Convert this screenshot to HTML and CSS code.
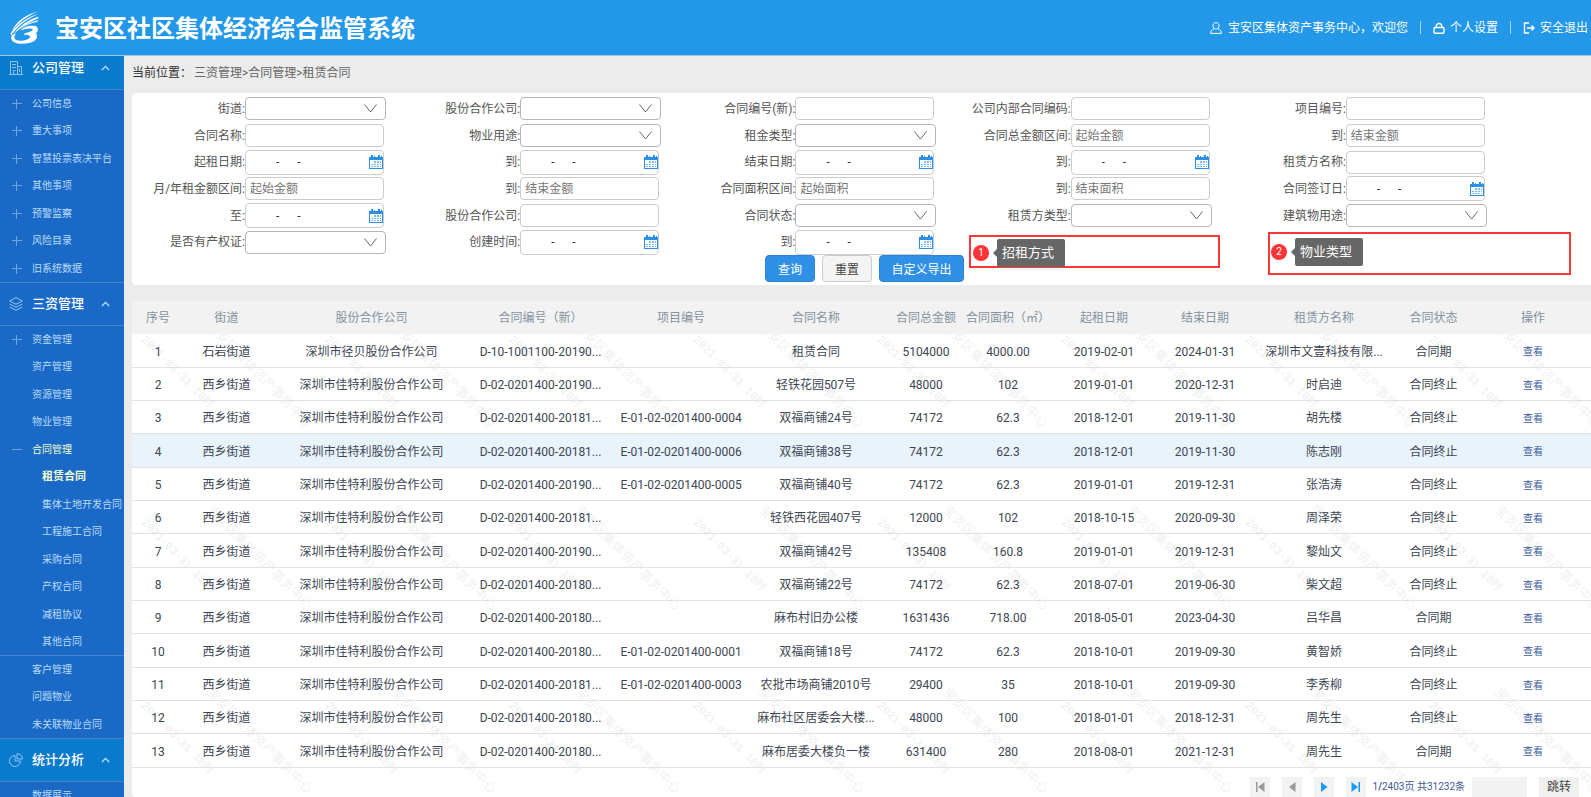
FILE: index.html
```html
<!DOCTYPE html>
<html lang="zh-CN">
<head>
<meta charset="utf-8">
<title>宝安区社区集体经济综合监管系统</title>
<link rel="stylesheet" href="styles.css">
</head>
<body>
<svg class="defs" aria-hidden="true">
  <symbol id="i-cal" viewBox="0 0 14 14"><path fill="#2b8fe6" d="M0 2h2V0h2v2h1V1h1v1h3V0h2v2h1V1h1v1h1v12H0z"/><path fill="#fff" d="M1 5h12v8H1z"/><path fill="#7db9ef" d="M2 9h2v1H2zM2 11h2v1H2zM5 6h2v2H5zM8 6h2v2H8zM11 6h1v2h-1zM5 9h2v1H5zM8 9h2v1H8zM11 9h1v1h-1zM5 11h2v1H5zM8 11h2v1H8zM11 11h1v1h-1z"/></symbol>
  <symbol id="i-up" viewBox="0 0 10 6"><path fill="none" stroke="currentColor" stroke-width="1.4" d="M1 5.2 5 1.2l4 4"/></symbol>
  <symbol id="i-plus" viewBox="0 0 10 10"><path stroke="currentColor" d="M0 4.500h10M4.500 0v10"/></symbol>
  <symbol id="i-minus" viewBox="0 0 10 10"><path stroke="currentColor" d="M0 4.500h10"/></symbol>
</svg>
<header class="top">
  <svg class="logo" viewBox="0 0 90 98" fill="#fff"><path d="M84 0C48 10 16 32 5 62 24 34 50 16 84 0z"/><path d="M86 7C54 18 22 38 2 66l1 8C24 42 52 24 86 7z"/><path d="M86 17C58 24 26 44 4 78 22 54 50 36 84 22z"/><path d="M85 27C60 32 30 46 14 66 30 50 56 38 82 32z"/><path d="M4 76C0 96 30 102 60 95 78 90 86 78 78 66 88 58 86 42 66 44 52 44 38 50 32 58c14-6 32-8 36-4 2 6-14 10-24 12l-2 5c12 0 20 2 18 7-4 10-40 16-46 4-2-5 0-9 4-14-8 2-12 4-14 8z"/></svg>
  <h1 class="title">宝安区社区集体经济综合监管系统</h1>
  <div class="user">
    <svg class="uicon" viewBox="0 0 12 12" fill="none" stroke="#fff"><path d="M6 .6c-4 0-4 6.400 0 6.400s4-6.400 0-6.400zM4 7C1.500 8 .6 9 .6 11.400h10.800C11.400 9 10.500 8 8 7"/></svg>
    <span>宝安区集体资产事务中心，欢迎您</span>
    <i class="bar"></i>
    <a href="#"><svg class="uicon" viewBox="0 0 12 12" fill="none" stroke="#fff" stroke-width="1.400"><rect x="1" y="5.500" width="10" height="5.800" rx="1"/><path d="M3 5.500C3 .2 9 .2 9 5.500"/></svg>个人设置</a>
    <i class="bar"></i>
    <a href="#"><svg class="uicon" viewBox="0 0 12 12" fill="none" stroke="#fff" stroke-width="1.400"><path d="M6 1H1.500v10H6M4 6h6M8.500 3.500 11 6 8.500 8.500"/></svg>安全退出</a>
  </div>
</header>
<div class="body">
  <nav class="side">
    <button class="group on first" type="button"><svg class="gicon" viewBox="0 0 14 14" fill="none" stroke="currentColor"><path d="M1.500 13V.5h7V13M9 5.500h3.500V13M0 13.500h14M3 3.500h4M3 6.500h4M4.500 13v-3.500h2M10.500 8v3"/></svg><span>公司管理</span><svg class="up"><use href="#i-up"/></svg></button>
    <ul class="menu" id="menu1"></ul>
    <button class="group" type="button"><svg class="gicon" viewBox="0 0 14 14" fill="none" stroke="currentColor"><path d="M7 .6 13.400 4 7 7.400.6 4zM.6 7 7 10.400 13.400 7M.6 10 7 13.400 13.400 10"/></svg><span>三资管理</span><svg class="up"><use href="#i-up"/></svg></button>
    <ul class="menu" id="menu2"></ul>
    <button class="group on" type="button"><svg class="gicon" viewBox="0 0 14 14" fill="none" stroke="currentColor"><path d="M6 2.500A5.500 5.500 0 1 0 11.500 8H6zM8 .6V6h5.400A5.400 5.400 0 0 0 8 .6z"/></svg><span>统计分析</span><svg class="up"><use href="#i-up"/></svg></button>
    <ul class="menu" id="menu3"></ul>
  </nav>
  <main class="main">
    <p class="crumb"><span class="here">当前位置：</span>三资管理&gt;合同管理&gt;租赁合同</p>
    <form class="panel">
      <div class="fields" id="fields"></div>
      <div class="actions">
        <button class="btn primary" type="button">查询</button>
        <button class="btn plain" type="button">重置</button>
        <button class="btn primary wide" type="button">自定义导出</button>
      </div>
      <div class="note note-a"><b class="num">1</b><span class="tip">招租方式</span></div>
      <div class="note note-b"><b class="num">2</b><span class="tip">物业类型</span></div>
    </form>
    <section class="list">
      <svg class="mark" aria-hidden="true" id="mark"><defs><g id="wm"><text class="stamp" transform="translate(9 13) rotate(45)">2021-03-31 18时</text><text transform="translate(74 0) rotate(45)">宝安区集体资产事务中心</text></g></defs></svg>
      <table class="grid">
        <colgroup><col class="c1"><col class="c2"><col class="c3"><col class="c4"><col class="c5"><col class="c6"><col class="c7"><col class="c8"><col class="c9"><col class="c10"><col class="c11"><col class="c12"><col class="c13"></colgroup>
        <thead><tr><th>序号</th><th>街道</th><th>股份合作公司</th><th>合同编号（新）</th><th>项目编号</th><th>合同名称</th><th>合同总金额</th><th>合同面积（㎡）</th><th>起租日期</th><th>结束日期</th><th>租赁方名称</th><th>合同状态</th><th>操作</th></tr></thead>
        <tbody id="rows"></tbody>
      </table>
      <div class="pager">
        <button class="pg off" type="button" aria-label="首页"><svg viewBox="0 0 10 10"><path fill="currentColor" d="M1 0h1.500v10H1zM9.500 0v10L3 5z"/></svg></button>
        <button class="pg off" type="button" aria-label="上一页"><svg viewBox="0 0 10 10"><path fill="currentColor" d="M8.500 0v10L2 5z"/></svg></button>
        <button class="pg" type="button" aria-label="下一页"><svg viewBox="0 0 10 10"><path fill="currentColor" d="M2 0v10l6.500-5z"/></svg></button>
        <button class="pg" type="button" aria-label="末页"><svg viewBox="0 0 10 10"><path fill="currentColor" d="M.5 0v10L7 5zM7.500 0H9v10H7.500z"/></svg></button>
        <span class="total">1<b>/</b>2403页 共31232条</span>
        <input class="jump" type="text" aria-label="页码">
        <button class="go" type="button">跳转</button>
      </div>
    </section>
  </main>
</div>
<script src="script.js"></script>
</body>
</html>
```
FILE: styles.css
```css
* { box-sizing: border-box; }
body {
  margin: 0;
  height: 100vh;
  overflow: hidden;
  display: flex;
  flex-direction: column;
  background: #ececec;
  color: #3d4653;
  font: 12px/16px Roboto, "Noto Sans CJK SC", sans-serif;
}
button, input, select { font: inherit; color: inherit; margin: 0; }
ul { list-style: none; margin: 0; padding: 0; }
a { color: inherit; text-decoration: none; }
.defs { position: absolute; width: 0; height: 0; }

.top {
  flex: none;
  display: flex;
  align-items: center;
  height: 55px;
  padding: 0 3px 0 10px;
  background: #2397e8;
  color: #fff;
}
.logo { width: 30px; height: 33px; }
.title { margin: 2px 0 0 15px; font-size: 24px; line-height: 32px; font-weight: 700; }
.user { margin-left: auto; display: flex; align-items: center; gap: 6px; }
.user a { display: flex; align-items: center; gap: 5px; }
.uicon { width: 12px; height: 12px; }
.bar { width: 1px; height: 13px; margin: 0 6px; background: #a9d6f7; }

.body { flex: 1; min-height: 0; display: flex; border-top: 1px solid #9cc8ec; }
.side { flex: none; width: 124px; overflow: hidden; background: #1b69c6; color: #b9dcfb; }
.group {
  display: flex;
  align-items: center;
  width: 100%;
  height: 44px;
  padding: 0 14px 0 9px;
  border: 0;
  border-bottom: 1px solid #4485d2;
  border-top: 1px solid #4485d2;
  background: transparent;
  color: #8fc4f2;
  font-size: 13px;
}
.group.on { background: #0a7bcc; }
.group.first { height: 34px; border-top: 0; padding-bottom: 9px; }
.group span { margin-left: 9px; color: #fff; font-weight: 500; }
.gicon { width: 14px; height: 14px; }
.up { width: 9px; height: 6px; margin-left: auto; color: #c5e2fa; }
.menu { display: grid; grid-auto-rows: 27px 28px; }
.menu li { display: flex; align-items: center; font-size: 10px; padding-left: 12px; white-space: nowrap; }
.menu svg { width: 10px; height: 10px; color: #6ba6e2; }
.menu a { margin-left: 10px; }
.menu li.leaf { padding-left: 22px; }
.menu li.sub { padding-left: 32px; }
.menu .open a, .menu .cur a { color: #f1ffd0; }
.menu .cur a { font-size: 11px; font-weight: 700; }
.menu .last { border-bottom: 1px solid #4485d2; }

.main { flex: 1; min-width: 0; display: flex; flex-direction: column; padding-left: 8px; }
.crumb { margin: 0; padding: 9px 0 12px; color: #666; }
.here { color: #333; margin-right: 2px; }
.panel { position: relative; padding: 2px 0 3px; background: #fff; border-radius: 4px 0 0 4px; }
.fields {
  display: grid;
  grid-template-columns: repeat(5, 1fr);
  grid-auto-rows: 27px 27px 26px;
  padding-right: 83px;
}
.field { display: flex; align-items: center; color: #555; }
.field label { flex: none; width: 113px; text-align: right; white-space: nowrap; }
.box { display: flex; align-items: center; position: relative; width: 139px; }
.box.sel { width: 141px; }
.box input, .box select {
  width: 100%;
  height: 23px;
  padding: 0 4px;
  border: 1px solid #ccc;
  border-radius: 4px;
  background: #fff;
  outline: 0;
}
.box select { border-color: #b5b5b5; appearance: none; }
.box.date input { height: 25px; padding-left: 30px; color: #333; }
.box input::placeholder { color: #777; opacity: 1; }
.box .cal { position: absolute; right: 1px; width: 14px; height: 14px; }
.box .down { position: absolute; right: 9px; width: 13px; height: 9px; pointer-events: none; }
.actions { display: flex; justify-content: center; gap: 7px; padding-left: 6px; }
.btn { height: 27px; width: 50px; padding: 2px 0 0; border-radius: 4px; border: 1px solid #2a83d6; background: #3090e5; color: #fff; }
.btn.plain { border-color: #ccc; background: #f4f4f4; color: #444; }
.btn.wide { width: 85px; }
.note { position: absolute; display: flex; align-items: center; border: 2px solid #fb3838; }
.note-a { left: 837px; top: 142px; width: 251px; height: 33px; padding: 2px 0 0 2px; }
.note-b { left: 1136px; top: 139px; width: 303px; height: 43px; padding: 0 0 4px 1px; }
.num { width: 16px; height: 16px; border-radius: 8px; background: #fb3535; color: #fff; font-size: 10px; font-weight: 400; text-align: center; }
.tip { position: relative; margin-left: 8px; padding: 5px; border-radius: 2px; background: #666; color: #fff; font-size: 13px; line-height: 18px; width: 68px; white-space: nowrap; }
.tip::before { content: ""; position: absolute; left: -4px; top: 10px; border: 4px solid transparent; border-left: 0; border-right-color: #666; }

.list { position: relative; flex: 1; min-height: 0; margin-top: 16px; overflow: hidden; background: #fff; border-radius: 4px 0 0 4px; }
.mark { position: absolute; left: 0; top: 0; width: 100%; height: 100%; fill: #ededed; font: 300 13px "Noto Sans CJK SC", sans-serif; }
.stamp { font: 11px "Liberation Mono", "Noto Sans CJK SC", monospace; }
.grid { position: relative; width: 100%; table-layout: fixed; border-collapse: separate; border-spacing: 0; }
.c1 { width: 43px; } .c2 { width: 103px; } .c3 { width: 187px; } .c4 { width: 151px; }
.c5 { width: 130px; } .c6 { width: 140px; } .c7 { width: 80px; } .c8 { width: 84px; }
.c9 { width: 108px; } .c10 { width: 94px; } .c11 { width: 144px; } .c12 { width: 75px; } .c13 { width: 120px; }
.grid th, .grid td { padding: 0; text-align: center; white-space: nowrap; font-weight: 400; }
.grid th { height: 33px; background: #f2f2f2; color: #8492a0; }
.grid td { height: 33px; padding-top: 2px; border-bottom: 1px solid #e2e2e2; }
.grid tr:nth-child(3n+1) td { height: 34px; }
.grid .hot td { background: #e8f3fc; }
.grid td:first-child, .grid th:first-child { padding-left: 9px; }
.grid td:last-child, .grid th:last-child { padding-left: 4px; }
.grid td a { font-size: 10px; color: #3a5ba0; }
.pager { position: relative; display: flex; justify-content: flex-end; align-items: center; padding: 9px 12px 0 0; gap: 12px; color: #3f5a8f; }
.pg { display: flex; align-items: center; justify-content: center; width: 20px; height: 20px; padding: 0; border: 0; background: #f2f2f2; color: #1b9cf0; }
.pg svg { width: 10px; height: 10px; }
.pg.off { color: #999; }
.total { font-size: 10px; margin-left: -5px; white-space: nowrap; }
.jump { width: 55px; height: 20px; border: 0; background: #f2f2f2; margin-left: -5px; }
.go { width: 40px; height: 20px; padding: 0; border: 0; background: #f0f0f0; color: #444; }
```
FILE: script.js
```js
const el = id => document.getElementById(id);

const item = ([name, cls]) => {
  const icon = cls.includes('plus') ? 'plus' : cls.includes('open') ? 'minus' : '';
  return `<li class="${cls}">${icon ? `<svg><use href="#i-${icon}"/></svg>` : ''}<a href="#">${name}</a></li>`;
};
el('menu1').innerHTML = ['公司信息', '重大事项', '智慧投票表决平台', '其他事项', '预警监察', '风险目录', '旧系统数据']
  .map(n => item([n, 'plus'])).join('');
el('menu2').innerHTML = [
  ['资金管理', 'plus'], ['资产管理', 'leaf'], ['资源管理', 'leaf'], ['物业管理', 'leaf'], ['合同管理', 'open'],
  ['租赁合同', 'sub cur'], ['集体土地开发合同', 'sub'], ['工程施工合同', 'sub'], ['采购合同', 'sub'],
  ['产权合同', 'sub'], ['减租协议', 'sub'], ['其他合同', 'sub last'],
  ['客户管理', 'leaf'], ['问题物业', 'leaf'], ['未关联物业合同', 'leaf']
].map(item).join('');
el('menu3').innerHTML = item(['数据展示', 'leaf']);

const fields = [
  ['街道', 's'], ['股份合作公司', 's'], ['合同编号(新)', 'i'], ['公司内部合同编码', 'i'], ['项目编号', 'i'],
  ['合同名称', 'i'], ['物业用途', 's'], ['租金类型', 's'], ['合同总金额区间', 'i', '起始金额'], ['到', 'i', '结束金额'],
  ['起租日期', 'd'], ['到', 'd'], ['结束日期', 'd'], ['到', 'd'], ['租赁方名称', 'i'],
  ['月/年租金额区间', 'i', '起始金额'], ['到', 'i', '结束金额'], ['合同面积区间', 'i', '起始面积'], ['到', 'i', '结束面积'], ['合同签订日', 'd'],
  ['至', 'd'], ['股份合作公司', 'i'], ['合同状态', 's'], ['租赁方类型', 's'], ['建筑物用途', 's'],
  ['是否有产权证', 's'], ['创建时间', 'd'], ['到', 'd']
];
el('fields').innerHTML = fields.map(([label, type, hint = ''], n) => {
  const id = 'f' + n;
  const box = {
    s: `<div class="box sel"><select id="${id}"><option></option></select><svg class="down" viewBox="0 0 13 9"><path fill="none" stroke="#666" d="M.5.5l6 7.500 6-7.500"/></svg></div>`,
    i: `<div class="box"><input id="${id}" type="text" placeholder="${hint}"></div>`,
    d: `<div class="box date"><input id="${id}" type="text" value="-      -"><svg class="cal"><use href="#i-cal"/></svg></div>`
  }[type];
  return `<div class="field"><label for="${id}">${label}:</label>${box}</div>`;
}).join('');

const jtl = '深圳市佳特利股份合作公司';
const rows = [
  ['石岩街道', '深圳市径贝股份合作公司', 'D-10-1001100-20190...', '', '租赁合同', '5104000', '4000.00', '2019-02-01', '2024-01-31', '深圳市文壹科技有限...', '合同期'],
  ['西乡街道', jtl, 'D-02-0201400-20190...', '', '轻铁花园507号', '48000', '102', '2019-01-01', '2020-12-31', '时启迪', '合同终止'],
  ['西乡街道', jtl, 'D-02-0201400-20181...', 'E-01-02-0201400-0004', '双福商铺24号', '74172', '62.3', '2018-12-01', '2019-11-30', '胡先楼', '合同终止'],
  ['西乡街道', jtl, 'D-02-0201400-20181...', 'E-01-02-0201400-0006', '双福商铺38号', '74172', '62.3', '2018-12-01', '2019-11-30', '陈志刚', '合同终止'],
  ['西乡街道', jtl, 'D-02-0201400-20190...', 'E-01-02-0201400-0005', '双福商铺40号', '74172', '62.3', '2019-01-01', '2019-12-31', '张浩涛', '合同终止'],
  ['西乡街道', jtl, 'D-02-0201400-20181...', '', '轻铁西花园407号', '12000', '102', '2018-10-15', '2020-09-30', '周泽荣', '合同终止'],
  ['西乡街道', jtl, 'D-02-0201400-20190...', '', '双福商铺42号', '135408', '160.8', '2019-01-01', '2019-12-31', '黎灿文', '合同终止'],
  ['西乡街道', jtl, 'D-02-0201400-20180...', '', '双福商铺22号', '74172', '62.3', '2018-07-01', '2019-06-30', '柴文超', '合同终止'],
  ['西乡街道', jtl, 'D-02-0201400-20180...', '', '麻布村旧办公楼', '1631436', '718.00', '2018-05-01', '2023-04-30', '吕华昌', '合同期'],
  ['西乡街道', jtl, 'D-02-0201400-20180...', 'E-01-02-0201400-0001', '双福商铺18号', '74172', '62.3', '2018-10-01', '2019-09-30', '黄智娇', '合同终止'],
  ['西乡街道', jtl, 'D-02-0201400-20181...', 'E-01-02-0201400-0003', '农批市场商铺2010号', '29400', '35', '2018-10-01', '2019-09-30', '李秀柳', '合同终止'],
  ['西乡街道', jtl, 'D-02-0201400-20180...', '', '麻布社区居委会大楼...', '48000', '100', '2018-01-01', '2018-12-31', '周先生', '合同终止'],
  ['西乡街道', jtl, 'D-02-0201400-20180...', '', '麻布居委大楼负一楼', '631400', '280', '2018-08-01', '2021-12-31', '周先生', '合同期']
];
el('rows').innerHTML = rows.map((r, n) =>
  `<tr${n === 3 ? ' class="hot"' : ''}><td>${n + 1}</td>${r.map(c => `<td>${c}</td>`).join('')}<td><a href="#">查看</a></td></tr>`
).join('');

let marks = '';
for (let y = 0; y < 3; y++)
  for (let x = -1; x < 8; x++)
    marks += `<use href="#wm" x="${x * 183 + x}" y="${y * 183 + 26}"/>`;
el('mark').insertAdjacentHTML('beforeend', marks);
```
